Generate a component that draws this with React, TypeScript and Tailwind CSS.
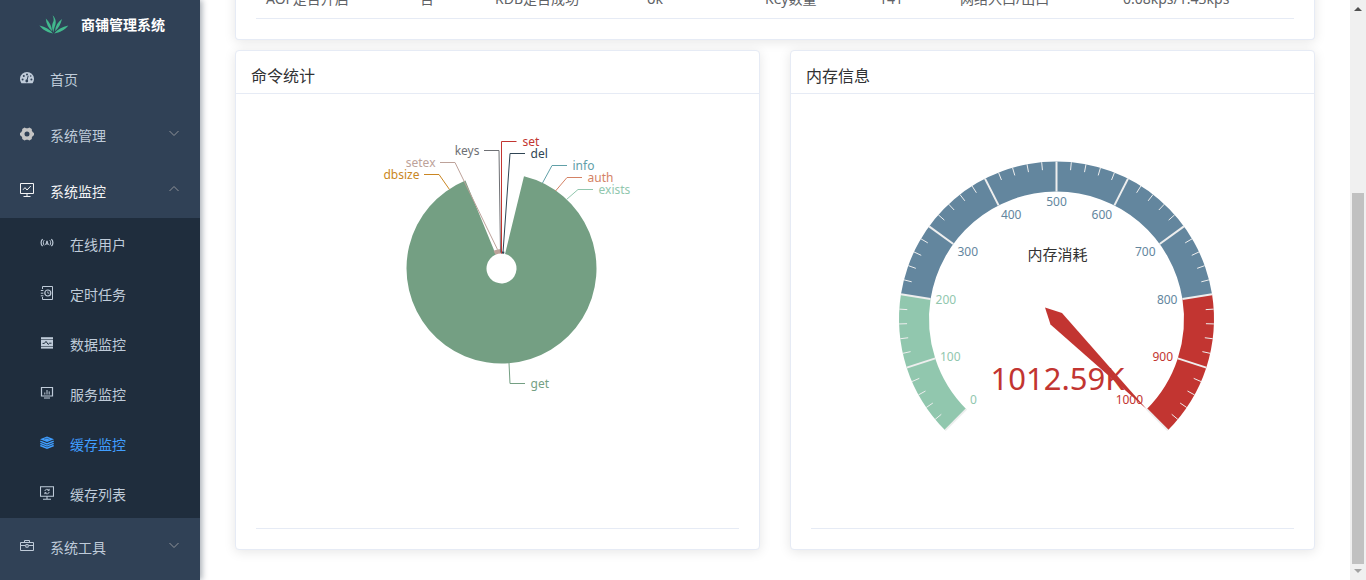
import React, { useState } from 'react';

interface MenuItem {
  label: string;
  icon: React.ReactNode;
  children?: { label: string; icon: React.ReactNode }[];
}

interface PieLabel {
  name: string;
  color: string;
  points: string;
  x: number;
  y: number;
  anchor: 'start' | 'end';
}

const Icon: React.FC<{ children: React.ReactNode }> = ({ children }) => (
  <svg viewBox="0 0 14 14" className="h-3.5 w-3.5 shrink-0" fill="none" stroke="currentColor">
    {children}
  </svg>
);

const dashboardIcon = (
  <Icon>
    <path d="M1.4 12.2A7 7 0 1 1 12.6 12.2Z" fill="currentColor" stroke="none" />
    <g className="fill-[#304156]" stroke="none">
      <circle cx="2.6" cy="8.4" r="1" />
      <circle cx="3.8" cy="5" r="1" />
      <circle cx="7" cy="3.4" r="1" />
      <circle cx="11.4" cy="8.4" r="1" />
      <circle cx="10.7" cy="5" r="0.8" />
      <circle cx="6.8" cy="10" r="1.4" />
    </g>
    <path d="M6.8 10L8.2 4.8" className="stroke-[#304156]" />
  </Icon>
);

const gearIcon = (
  <Icon>
    <path
      d="M4.6 0.5L6 1.3H8L9.4 0.5L11.8 1.9V3.6L12.8 5.2L14 6V8.2L12.8 8.9L11.8 10.5V12.1L9.4 13.5L8 12.7H6L4.6 13.5L2.2 12.1V10.5L1.2 8.9L0 8.2V6L1.2 5.2L2.2 3.6V1.9ZM7 4.5A2.5 2.5 0 1 0 7 9.5A2.5 2.5 0 1 0 7 4.5Z"
      fill="#c4c4c4"
      stroke="none"
      fillRule="evenodd"
    />
  </Icon>
);

const monitorIcon = (
  <Icon>
    <path d="M0.5 0.5H13.5V10.5H0.5ZM7 10.5V13.5M3.5 13.5H10.5" />
    <path d="M3 6.8L5 4.6L7 7L10.8 3" />
  </Icon>
);

const onlineIcon = (
  <Icon>
    <path d="M2.6 3.2C0.6 5.2 0.6 8.2 2.6 10.2M11.4 3.2C13.4 5.2 13.4 8.2 11.4 10.2" strokeWidth="1.2" />
    <path d="M4.2 4.2C3 5.8 3 7.8 4.2 9.4M9.8 4.2C11 5.8 11 7.8 9.8 9.4" />
    <path d="M5.6 9L7 4.8L8.4 9M6 7.8H8" />
  </Icon>
);

const jobIcon = (
  <Icon>
    <path d="M2.5 3V0.5H12.5V13.5H2.5V11" />
    <path d="M0.8 4.5H3.4M0.8 7.2H3.4M0.8 9.8H3.4" />
    <circle cx="7.8" cy="7" r="3" strokeWidth="1.2" />
    <path d="M7.8 5.4V7.2H9.4" strokeWidth="0.8" />
  </Icon>
);

const druidIcon = (
  <Icon>
    <path d="M1 1.2H13V12.6H1Z" fill="currentColor" stroke="none" />
    <path d="M1 3.5H13M1 10.5H13" className="stroke-[#1f2d3d]" strokeWidth="0.6" />
    <path d="M2.5 7.4H4.4L6 5.4L8.2 8.4L9.6 7.2H11.5" className="stroke-[#1f2d3d]" />
  </Icon>
);

const serverIcon = (
  <Icon>
    <path d="M1.5 1.5H12.5V10H1.5Z" strokeWidth="1.2" />
    <path d="M4.8 8.5V6.5M7 8.5V4M9.2 8.5V5.4" />
    <path d="M4 12H10" />
  </Icon>
);

const redisIcon = (
  <Icon>
    <path d="M7 0.6L14 3.2L7 6L0 3.2Z" fill="currentColor" stroke="none" />
    <path d="M0.3 5.2L7 7.9L13.7 5.2M0.3 7.4L7 10.1L13.7 7.4M0.3 9.5L7 12.2L13.7 9.5" strokeWidth="1.4" />
    <path d="M4 3.2L7 2.2L9.6 3.4" className="stroke-[#1f2d3d]" strokeWidth="0.5" />
  </Icon>
);

const cacheListIcon = (
  <Icon>
    <path d="M0.5 0.8H13.5V10.2H0.5ZM7 10.2V13M3 13.3H11" strokeWidth="1.1" />
    <path d="M4.8 5A2.3 2.3 0 0 1 9 4.4M9.2 6A2.3 2.3 0 0 1 5 6.8M9.2 2.8V4.6H7.6M4.8 8.2V6.6H6.4" strokeWidth="0.9" />
  </Icon>
);

const toolIcon = (
  <Icon>
    <path d="M0.5 3.5H13.5V11.5H0.5ZM4.5 3.5V1.5H9.5V3.5M0.5 6.5H5.5M8.5 6.5H13.5" />
    <path d="M5.8 5.6H8.2V8.2H5.8Z" />
  </Icon>
);

const menu: MenuItem[] = [
  { label: '首页', icon: dashboardIcon },
  { label: '系统管理', icon: gearIcon, children: [] },
  {
    label: '系统监控',
    icon: monitorIcon,
    children: [
      { label: '在线用户', icon: onlineIcon },
      { label: '定时任务', icon: jobIcon },
      { label: '数据监控', icon: druidIcon },
      { label: '服务监控', icon: serverIcon },
      { label: '缓存监控', icon: redisIcon },
      { label: '缓存列表', icon: cacheListIcon },
    ],
  },
  { label: '系统工具', icon: toolIcon, children: [] },
];

const Logo = () => (
  <svg viewBox="0 0 30 20" className="h-5 w-[30px]" fill="#42b98d">
    <path d="M14.4 17.4C12.4 12.4 13 9 14.4 6.6C15 4.6 14.6 2.6 13.6 0.2C17.2 3.6 17.4 8 15.8 11.4C15 13.4 14.6 15.2 14.4 17.4Z" />
    <path d="M13.2 16.2C9.4 13.4 7.2 8.6 6.8 3.4C10.4 6.8 12.6 11 13.2 16.2Z" />
    <path d="M16 16.2C16.4 11.2 18.8 6.8 23 4C21.6 9.2 19.6 13.4 16 16.2Z" />
    <path d="M14 18.4C9 17.6 3.6 14.8 0.4 10.4C6.2 11.8 11.2 14.6 14 18.4Z" />
    <path d="M15.2 18.4C18.2 14.6 23.2 11.8 29.4 10.4C26 14.8 20.6 17.6 15.2 18.4Z" />
  </svg>
);

const Chevron: React.FC<{ up: boolean }> = ({ up }) => (
  <svg viewBox="0 0 12 12" className="mb-0.5 ml-auto h-3 w-3" fill="none" stroke="#909399">
    <path d={up ? 'M1.5 8L6 3.5L10.5 8' : 'M1.5 4L6 8.5L10.5 4'} />
  </svg>
);

const Sidebar = () => {
  const [opened, setOpened] = useState('系统监控');
  const [active, setActive] = useState('缓存监控');

  return (
    <aside className="z-10 w-[200px] shrink-0 overflow-hidden bg-[#304156] text-sm text-[#bfcbd9] shadow-[2px_0_6px_rgba(0,21,41,0.35)]">
      <a href="#" className="flex h-[50px] items-center justify-center gap-3 pl-1 font-bold text-white">
        <Logo />
        <h1>商铺管理系统</h1>
      </a>
      <ul>
        {menu.map((item) => {
          const isOpen = opened === item.label;
          return (
            <li key={item.label}>
              {item.children ? (
                <button
                  type="button"
                  onClick={() => setOpened(isOpen ? '' : item.label)}
                  className={`flex h-14 w-full items-center gap-4 px-5 ${isOpen ? 'text-[#f4f4f5]' : ''}`}
                >
                  {item.icon}
                  <span className="pt-1">{item.label}</span>
                  <Chevron up={isOpen} />
                </button>
              ) : (
                <a href="#" className="flex h-14 items-center gap-4 px-5">
                  {item.icon}
                  <span className="pt-1">{item.label}</span>
                </a>
              )}
              {isOpen && (
                <ul className="bg-[#1f2d3d]">
                  {item.children?.map((child) => (
                    <li key={child.label}>
                      <a
                        href="#"
                        onClick={() => setActive(child.label)}
                        className={`flex h-[50px] items-center gap-4 pl-10 ${
                          active === child.label ? 'text-[#409eff]' : ''
                        }`}
                      >
                        {child.icon}
                        <span className="pt-1">{child.label}</span>
                      </a>
                    </li>
                  ))}
                </ul>
              )}
            </li>
          );
        })}
      </ul>
    </aside>
  );
};

// all coordinates are relative to the centre of the pie
const pieLabels: PieLabel[] = [
  { name: 'keys', color: '#6e7074', points: '-1,-16 -2.5,-118 -17.5,-118', x: -22, y: -118, anchor: 'end' },
  { name: 'setex', color: '#bda29a', points: '-4,-19 -46.5,-106 -61.5,-106', x: -66, y: -106, anchor: 'end' },
  { name: 'dbsize', color: '#ca8622', points: '-52,-79 -62.5,-94 -77.5,-94', x: -82, y: -94, anchor: 'end' },
  { name: 'get', color: '#749f83', points: '7.5,94.5 8.5,115 23.5,115', x: 29, y: 115, anchor: 'start' },
  { name: 'exists', color: '#91c7ae', points: '65,-69 76.5,-79 91.5,-79', x: 97, y: -79, anchor: 'start' },
  { name: 'auth', color: '#d48265', points: '54,-77.5 65.5,-91 80.5,-91', x: 86, y: -91, anchor: 'start' },
  { name: 'info', color: '#61a0a8', points: '41,-85.5 50.5,-103 65.5,-103', x: 71, y: -103, anchor: 'start' },
  { name: 'del', color: '#2f4554', points: '1.5,-16 8.5,-115 23.5,-115', x: 29, y: -115, anchor: 'start' },
  { name: 'set', color: '#c23531', points: '0,-15 0,-127 15,-127', x: 21, y: -127, anchor: 'start' },
];

const polar = (deg: number, r: number) => {
  const a = (deg * Math.PI) / 180;
  return [Math.sin(a) * r, -Math.cos(a) * r];
};

// ring sector, angles clockwise from twelve o'clock
const sector = (from: number, to: number, inner: number, outer: number) => {
  const large = to - from > 180 ? 1 : 0;
  return `M${polar(from, outer)} A${outer} ${outer} 0 ${large} 1 ${polar(to, outer)} L${polar(to, inner)} A${inner} ${inner} 0 ${large} 0 ${polar(from, inner)}Z`;
};

const CommandChart = () => (
  <svg width="421" height="420" viewBox="-210.5 -159.5 421 420" className="font-['Noto_Sans',sans-serif] text-xs">
    <path d={sector(13.7, 337.7, 15, 95)} fill="#749f83" />
    <path d={sector(336, 359, 15, 19.5)} fill="#bda29a" />
    <path d={sector(0, 10, 15, 17)} fill="#2f4554" />
    {pieLabels.map((label) => (
      <g key={label.name}>
        <polyline points={label.points} fill="none" stroke={label.color} />
        <text x={label.x} y={label.y + 4} textAnchor={label.anchor} fill={label.color}>
          {label.name}
        </text>
      </g>
    ))}
  </svg>
);

const gaugeColor = (value: number) => {
  if (value <= 200) return '#91c7ae';
  return value <= 800 ? '#63869e' : '#c23531';
};

// labels in the upper part hang below their tick, the lowest ones stand on it
const labelShift = (y: number) => {
  if (y < -50) return 9;
  return y > 80 ? -2 : 4;
};

const labelAnchor = (x: number) => {
  if (Math.abs(x) < 1) return 'middle';
  return x < 0 ? 'start' : 'end';
};

const MemoryChart = () => (
  <svg width="421" height="420" viewBox="-210.5 -210 421 420" className="font-['Noto_Sans','Noto_Sans_CJK_SC',sans-serif] text-xs">
    <path d={sector(-135, -81, 127.5, 157.5)} fill="#91c7ae" />
    <path d={sector(-81, 81, 127.5, 157.5)} fill="#63869e" />
    <path d={sector(81, 135, 127.5, 157.5)} fill="#c23531" />
    {Array.from({ length: 51 }, (_, i) => {
      const major = i % 5 === 0;
      const deg = -135 + i * 5.4;
      const [x1, y1] = polar(deg, 157.5);
      const [x2, y2] = polar(deg, major ? 127.5 : 149.5);
      return <line key={i} x1={x1} y1={y1} x2={x2} y2={y2} stroke="#eee" strokeWidth={major ? 2 : 1} />;
    })}
    {Array.from({ length: 11 }, (_, i) => {
      const [x, y] = polar(-135 + i * 27, 122.5);
      return (
        <text key={i} x={x} y={y + labelShift(y)} textAnchor={labelAnchor(x)} fill={gaugeColor(i * 100)}>
          {i * 100}
        </text>
      );
    })}
    <text x="1" y="-59" textAnchor="middle" fill="#333" className="text-[15px]">
      内存消耗
    </text>
    <text x="1" y="71" textAnchor="middle" fill="#c23531" className="text-[31px]">
      1012.59K
    </text>
    <path d="M-11.5 -11.5L5.5 -6L90 90L-6 5.5Z" fill="#c23531" />
  </svg>
);

const Card: React.FC<{ title: string; children: React.ReactNode }> = ({ title, children }) => (
  <section className="flex-1 rounded-sm border border-[#e6ebf5] bg-white text-[#303133] shadow-[0_2px_12px_rgba(0,0,0,0.1)]">
    <h2 className="border-b border-[#e6ebf5] px-[15px] pt-3.5 pb-[5px] text-base leading-[23px]">{title}</h2>
    <div className="px-5 pt-[15px] pb-5">
      <div className="flex h-[420px] justify-center overflow-hidden border-b border-[#e6ebf5] pl-2">{children}</div>
    </div>
  </section>
);

const InfoTable = () => (
  <section className="rounded-b-sm border border-t-0 border-[#e6ebf5] bg-white px-5 pb-5 shadow-[0_2px_12px_rgba(0,0,0,0.1)]">
    <table className="w-full table-fixed text-left text-sm leading-[23px] text-[#606266]">
      <tbody>
        <tr className="border-b border-[#e6ebf5]">
          <td className="w-[154px] px-2.5 pt-3 pb-2">AOF是否开启</td>
          <td className="w-[75px] px-2.5 pt-3 pb-2">否</td>
          <td className="w-[152px] px-2.5 pt-3 pb-2">RDB是否成功</td>
          <td className="w-[118px] px-2.5 pt-3 pb-2">ok</td>
          <td className="w-[114px] px-2.5 pt-3 pb-2">Key数量</td>
          <td className="w-[81px] px-2.5 pt-3 pb-2">141</td>
          <td className="w-[163px] px-2.5 pt-3 pb-2">网络入口/出口</td>
          <td className="px-2.5 pt-3 pb-2">0.08kps/1.43kps</td>
        </tr>
      </tbody>
    </table>
  </section>
);

const ScrollBar = () => (
  <div className="flex w-4 shrink-0 flex-col items-center bg-[#f0f0f0]">
    <svg viewBox="0 0 16 17" className="h-[17px] w-4" fill="#505050">
      <path d="M4 11L8 7L12 11Z" />
    </svg>
    <div className="grow-[176]" />
    <div className="w-3 grow-[371] bg-[#c1c1c1]" />
    <svg viewBox="0 0 16 16" className="h-4 w-4" fill="#a3a3a3">
      <path d="M4 5L8 9L12 5Z" />
    </svg>
  </div>
);

export default function App() {
  return (
    <div className="flex h-screen overflow-hidden bg-white font-['Noto_Sans','Noto_Sans_CJK_SC',sans-serif]">
      <Sidebar />
      <main className="flex min-w-0 flex-1 flex-col justify-end gap-2.5 overflow-hidden px-[35px] pb-[30px]">
        <InfoTable />
        <div className="flex gap-[30px]">
          <Card title="命令统计">
            <CommandChart />
          </Card>
          <Card title="内存信息">
            <MemoryChart />
          </Card>
        </div>
      </main>
      <ScrollBar />
    </div>
  );
}
